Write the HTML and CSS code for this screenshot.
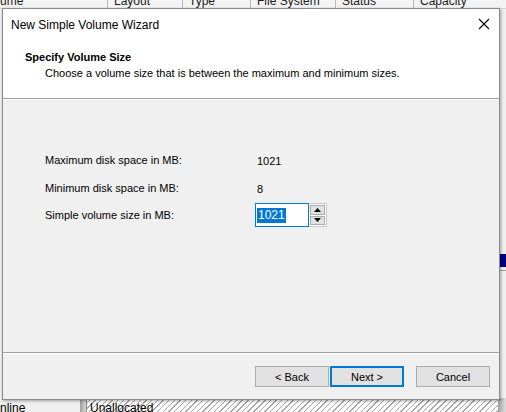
FILE: index.html
```html
<!DOCTYPE html>
<html>
<head>
<meta charset="utf-8">
<link rel="stylesheet" href="styles.css">
</head>
<body>
<div class="app">
  <div class="colheads">
    <div class="col c1">ume</div>
    <div class="col c2">Layout</div>
    <div class="col c3">Type</div>
    <div class="col c4">File System</div>
    <div class="col c5">Status</div>
    <div class="col c6">Capacity</div>
  </div>
  <div class="app-mid">
    <div class="mid-left"></div>
    <div class="mid-right">
      <div class="navy"></div>
      <div class="rline"></div>
    </div>
  </div>
  <div class="app-bottom">
    <div class="disk-state">nline</div>
    <div class="disk-bar"></div>
    <div class="unalloc">Unallocated</div>
    <div class="disk-end"></div>
  </div>

  <div class="dialog">
    <div class="titlebar">
      <span class="title">New Simple Volume Wizard</span>
      <svg class="close" width="12" height="12" viewBox="0 0 12 12"><path d="M1 1L11 11M11 1L1 11" stroke="#000" stroke-width="1.1" fill="none"/></svg>
    </div>
    <div class="header">
      <div class="h-title">Specify Volume Size</div>
      <div class="h-sub">Choose a volume size that is between the maximum and minimum sizes.</div>
    </div>
    <div class="body">
      <div class="row r1"><span class="lbl">Maximum disk space in MB:</span><span class="val">1021</span></div>
      <div class="row r2"><span class="lbl">Minimum disk space in MB:</span><span class="val">8</span></div>
      <div class="row r3"><span class="lbl">Simple volume size in MB:</span>
        <div class="spin">
          <div class="input"><span class="sel">1021</span></div>
          <div class="spinbtns">
            <div class="sb"><svg width="7" height="4" viewBox="0 0 7 4"><path d="M3.5 0L7 4H0Z" fill="#000"/></svg></div>
            <div class="sb"><svg width="7" height="4" viewBox="0 0 7 4"><path d="M0 0H7L3.5 4Z" fill="#000"/></svg></div>
          </div>
        </div>
      </div>
    </div>
    <div class="footer">
      <button class="btn">&lt; Back</button>
      <button class="btn default">Next &gt;</button>
      <button class="btn cancel">Cancel</button>
    </div>
  </div>
</div>
</body>
</html>
```
FILE: styles.css
```css
html, body {
  margin: 0;
  padding: 0;
}
body {
  width: 506px;
  height: 412px;
  overflow: hidden;
  font-family: "Liberation Sans", Arial, sans-serif;
  font-size: 11px;
  color: #000;
  background: #fff;
}
.app {
  position: relative;
  width: 506px;
  height: 412px;
  display: flex;
  flex-direction: column;
  overflow: hidden;
}
.colheads {
  display: flex;
  height: 8px;
  background: #f3f3f3;
  border-bottom: 1px solid #d5d5d5;
  overflow: hidden;
  flex: none;
}
.col {
  box-sizing: border-box;
  border-right: 1px solid #b9b9b9;
  font-size: 12px;
  line-height: 12px;
  margin-top: -5px;
  padding-left: 6px;
  color: #1a1a1a;
  white-space: nowrap;
  height: 14px;
}
.c1 { width: 108px; padding-left: 0; }
.c2 { width: 75px; }
.c3 { width: 68px; }
.c4 { width: 85px; }
.c5 { width: 78px; }
.c6 { flex: 1; border-right: none; }

.app-mid {
  flex: 1;
  display: flex;
  justify-content: space-between;
  background: #fff;
}
.mid-left {
  width: 3px;
  background: #f0f0f0;
}
.mid-right {
  width: 8px;
  background: #f0f0f0;
  padding-top: 245px;
  box-sizing: border-box;
}
.navy {
  height: 13px;
  background: #000080;
  margin-left: 1px;
}
.rline {
  height: 1px;
  background: #a0a0a0;
  margin-top: 3px;
}
.app-bottom {
  height: 14px;
  display: flex;
  flex: none;
  background: #f0f0f0;
}
.disk-state {
  width: 80px;
  font-size: 12px;
  line-height: 14px;
  padding-top: 3px;
  box-sizing: border-box;
  overflow: hidden;
}
.disk-bar {
  width: 6px;
  background: linear-gradient(to right, #a0a0a0, #d6d6d6);
}
.unalloc {
  flex: 1;
  font-size: 12px;
  line-height: 14px;
  padding-top: 3px;
  padding-left: 3px;
  box-sizing: border-box;
  border-left: 1px solid #888;
  background: repeating-linear-gradient(135deg, #fff 0, #fff 3px, #a8a8a8 3px, #a8a8a8 4px);
}
.disk-end {
  width: 8px;
  background: linear-gradient(to right, #a0a0a0, #e0e0e0);
}

/* dialog window overlaying the app */
.dialog {
  position: absolute;
  left: 2px;
  top: 8px;
  width: 498px;
  height: 392px;
  box-sizing: border-box;
  border: 1px solid #8a8a8a;
  background: #f0f0f0;
  display: flex;
  flex-direction: column;
  box-shadow: 1px 1px 3px rgba(0,0,0,0.35);
}
.titlebar {
  height: 29px;
  background: #fff;
  display: flex;
  align-items: center;
  justify-content: space-between;
  padding: 0 9px 0 8px;
  flex: none;
}
.title {
  font-size: 12px;
  color: #000;
  padding-top: 2px;
}
.close {
  display: block;
  margin-top: 1px;
}
.header {
  height: 61px;
  background: #fff;
  box-sizing: border-box;
  padding: 12px 0 0 22px;
  border-bottom: 1px solid #a0a0a0;
  box-shadow: 0 1px 0 #fff;
  flex: none;
}
.h-title {
  font-weight: bold;
  font-size: 11px;
  line-height: 14px;
}
.h-sub {
  padding-left: 20px;
  margin-top: 2px;
  line-height: 14px;
}
.body {
  flex: 1;
  padding: 55px 0 0 42px;
  border-bottom: 1px solid #a0a0a0;
  box-shadow: 0 1px 0 #fff;
}
.row {
  display: flex;
  align-items: center;
}
.lbl {
  width: 212px;
  line-height: 13px;
}
.r2 { margin-top: 15px; }
.r3 { margin-top: 8px; }
.r1, .r2 { height: 13px; }
.spin {
  display: flex;
  margin-left: -2px;
}
.input {
  width: 54px;
  height: 24px;
  box-sizing: border-box;
  border: 1px solid #0078d7;
  background: #fff;
  padding: 4px 0 0 1px;
  font-size: 12px;
}
.sel {
  background: #0078d7;
  color: #fff;
  line-height: 15px;
  display: inline-block;
  padding: 0 1px;
}
.spinbtns {
  display: flex;
  flex-direction: column;
  width: 18px;
  height: 24px;
  box-sizing: border-box;
  border: 1px solid #c8c8c8;
  border-left: none;
  padding: 1px;
  gap: 1px;
  background: #fff;
}
.sb {
  flex: 1;
  background: #e1e1e1;
  border: 1px solid #adadad;
  display: flex;
  align-items: center;
  justify-content: center;
}
.sb svg { display: block; }
.footer {
  height: 46px;
  flex: none;
  display: flex;
  align-items: flex-start;
  padding: 13px 0 0 252px;
  box-sizing: border-box;
}
.btn {
  width: 74px;
  height: 21px;
  box-sizing: border-box;
  border: 1px solid #adadad;
  background: #e1e1e1;
  font-family: "Liberation Sans", Arial, sans-serif;
  font-size: 11px;
  color: #000;
  padding: 0;
  margin: 0;
}
.btn.default {
  border: 2px solid #0078d7;
  margin-left: 1px;
}
.btn.cancel {
  margin-left: 12px;
}
```
